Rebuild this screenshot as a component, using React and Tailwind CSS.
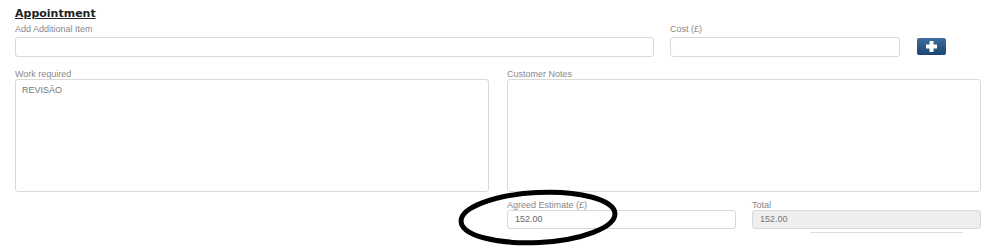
import React from "react";

const label = "block text-[9px] leading-[10px] text-[#888]";
const box = "border border-[#d9d9d9] rounded-[3px] bg-white";

export default function App() {
  return (
    <div className="relative w-[1000px] h-[249px] overflow-hidden bg-white font-['Liberation_Sans',Arial,sans-serif]">
      <div className="pl-[15px] pt-[6px]">
        {/* Heading */}
        <h2 className="font-['DejaVu_Sans',Verdana,sans-serif] font-bold text-[11px] leading-[15px] text-[#222] underline">
          Appointment
        </h2>

        {/* Additional item row */}
        <div className="flex items-start mt-[3px]">
          <div className="w-[639px]">
            <span className="block text-[9px] leading-[11px] text-[#888]">Add Additional Item</span>
            <div className={`${box} h-[20px] mt-[2px]`}></div>
          </div>
          <div className="w-[230px] ml-[16px]">
            <span className="block text-[9px] leading-[11px] text-[#888]">Cost (£)</span>
            <div className={`${box} h-[20px] mt-[2px]`}></div>
          </div>
          <button className="ml-[17px] mt-[14px] w-[29px] h-[17px] rounded-[2px] bg-gradient-to-b from-[#3d6f9f] to-[#1b4472] flex items-center justify-center">
            <svg width="11" height="11" viewBox="0 0 11 11">
              <path d="M3.5 0h4v3.5H11v4H7.5V11h-4V7.5H0v-4h3.5z" fill="#fff" />
            </svg>
          </button>
        </div>

        {/* Notes row */}
        <div className="flex mt-[12px]">
          <div className="w-[474px]">
            <span className={label}>Work required</span>
            <div className={`${box} h-[113px] px-[6px] pt-[5px] text-[9px] leading-[11px] text-[#777]`}>
              REVISÃO
            </div>
          </div>
          <div className="w-[474px] ml-[18px]">
            <span className={label}>Customer Notes</span>
            <div className={`${box} h-[113px]`}></div>
          </div>
        </div>

        {/* Totals row */}
        <div className="flex mt-[8px] ml-[492px]">
          <div className="w-[229px]">
            <span className={label}>Agreed Estimate (£)</span>
            <div className={`${box} h-[19px] px-[7px] text-[9px] leading-[17px] text-[#666]`}>152.00</div>
          </div>
          <div className="w-[229px] ml-[16px]">
            <span className={label}>Total</span>
            <div className="border border-[#d9d9d9] rounded-[3px] bg-[#eeeeee] h-[19px] px-[7px] text-[9px] leading-[17px] text-[#777]">
              152.00
            </div>
            <div className="mt-[3px] ml-[58px] w-[153px] border-t border-[#dcdcdc]"></div>
          </div>
        </div>
      </div>

      {/* Hand-drawn annotation */}
      <svg className="absolute left-[453px] top-[186px]" width="170" height="63" viewBox="0 0 170 63">
        <ellipse cx="85" cy="31.5" rx="77" ry="25" fill="none" stroke="#000" strokeWidth="5" transform="rotate(-3 85 31.5)" />
      </svg>
    </div>
  );
}
